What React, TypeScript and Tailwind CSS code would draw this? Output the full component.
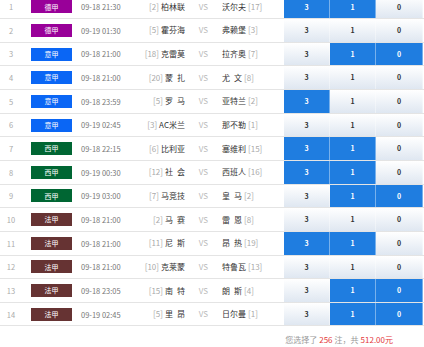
import React from "react";

type Match = {
    league: string;
    time: string;
    homeRank: number;
    home: string;
    away: string;
    awayRank: number;
    picks: [boolean, boolean, boolean];
};

const LEAGUE_COLORS: Record<string, string> = {
    德甲: "bg-[#990099]",
    意甲: "bg-[#0a66f5]",
    西甲: "bg-[#006633]",
    法甲: "bg-[#663333]",
};

// two-char names are padded with an en space, as on the original page
const matches: Match[] = [
    { league: "德甲", time: "09-18 21:30", homeRank: 2, home: "柏林联", away: "沃尔夫", awayRank: 17, picks: [true, true, false] },
    { league: "德甲", time: "09-19 01:30", homeRank: 5, home: "霍芬海", away: "弗赖堡", awayRank: 3, picks: [false, false, false] },
    { league: "意甲", time: "09-18 21:00", homeRank: 18, home: "克雷莫", away: "拉齐奥", awayRank: 7, picks: [false, true, true] },
    { league: "意甲", time: "09-18 21:00", homeRank: 20, home: "蒙\u2002扎", away: "尤\u2002文", awayRank: 8, picks: [false, false, false] },
    { league: "意甲", time: "09-18 23:59", homeRank: 5, home: "罗\u2002马", away: "亚特兰", awayRank: 2, picks: [true, false, false] },
    { league: "意甲", time: "09-19 02:45", homeRank: 3, home: "AC米兰", away: "那不勒", awayRank: 1, picks: [false, false, false] },
    { league: "西甲", time: "09-18 22:15", homeRank: 6, home: "比利亚", away: "塞维利", awayRank: 15, picks: [true, true, false] },
    { league: "西甲", time: "09-19 00:30", homeRank: 12, home: "社\u2002会", away: "西班人", awayRank: 16, picks: [true, true, false] },
    { league: "西甲", time: "09-19 03:00", homeRank: 7, home: "马竞技", away: "皇\u2002马", awayRank: 2, picks: [false, true, true] },
    { league: "法甲", time: "09-18 21:00", homeRank: 2, home: "马\u2002赛", away: "雷\u2002恩", awayRank: 8, picks: [false, false, false] },
    { league: "法甲", time: "09-18 21:00", homeRank: 11, home: "尼\u2002斯", away: "昂\u2002热", awayRank: 19, picks: [true, true, false] },
    { league: "法甲", time: "09-18 21:00", homeRank: 10, home: "克莱蒙", away: "特鲁瓦", awayRank: 13, picks: [false, false, false] },
    { league: "法甲", time: "09-18 23:05", homeRank: 15, home: "南\u2002特", away: "朗\u2002斯", awayRank: 4, picks: [false, true, true] },
    { league: "法甲", time: "09-19 02:45", homeRank: 5, home: "里\u2002昂", away: "日尔曼", awayRank: 1, picks: [false, true, true] },
];

const RESULTS = ["3", "1", "0"];

function OddsCell({ label, selected, last }: { label: string; selected: boolean; last?: boolean }) {
    return (
        <div
            className={`${last ? "w-[47px]" : "w-[46px]"} h-full flex items-center justify-center text-[7px] font-bold border-r border-white/40 ${
                selected
                    ? "bg-[#1f7de0] text-white"
                    : "bg-gradient-to-b from-white to-[#dfe7f1] text-[#333]"
            }`}
        >
            {label}
        </div>
    );
}

function MatchRow({ index, match }: { index: number; match: Match }) {
    return (
        <div className="flex items-stretch h-[23.65px] border-b border-[#e4e4e4]">
            <div className="w-[22px] flex items-center justify-center text-[7.5px] text-[#aaa]">{index}</div>
            <div className="w-[59px] flex items-center pl-[9px]">
                <span
                    className={`w-[41px] h-[13px] flex items-center justify-center text-[7px] text-white ${LEAGUE_COLORS[match.league]}`}
                >
                    {match.league}
                </span>
            </div>
            <div className="w-[50px] flex items-center text-[7.5px] text-[#777] whitespace-nowrap">{match.time}</div>
            <div className="w-[54px] flex items-center justify-end text-[8px] whitespace-nowrap">
                <span className="text-[#aaa] mr-[2px]">[{match.homeRank}]</span>
                <span className="text-[#333]">{match.home}</span>
            </div>
            <div className="w-[37px] flex items-center justify-center text-[8px] text-[#bbb]">VS</div>
            <div className="w-[62px] flex items-center text-[8px] whitespace-nowrap">
                <span className="text-[#333]">{match.away}</span>
                <span className="text-[#aaa] ml-[2px]">[{match.awayRank}]</span>
            </div>
            <div className="flex flex-1">
                {RESULTS.map((r, i) => (
                    <OddsCell key={r} label={r} selected={match.picks[i]} last={i === 2} />
                ))}
            </div>
        </div>
    );
}

export default function App() {
    return (
        <div
            className="w-[424px] h-[347px] overflow-hidden bg-white"
            style={{ fontFamily: '"Noto Sans CJK SC", "Noto Sans", sans-serif' }}
        >
            <div className="-mt-[4.5px]">
                {matches.map((m, i) => (
                    <MatchRow key={i} index={i + 1} match={m} />
                ))}
            </div>
            {/* Footer summary */}
            <div className="h-[28px] flex items-center justify-end pr-[31px] text-[8px] text-[#999]">
                您选择了
                <span className="text-[#e4393c] mx-[2px]">256</span>
                注，共
                <span className="text-[#e4393c] ml-[2px]">512.00元</span>
            </div>
        </div>
    );
}
